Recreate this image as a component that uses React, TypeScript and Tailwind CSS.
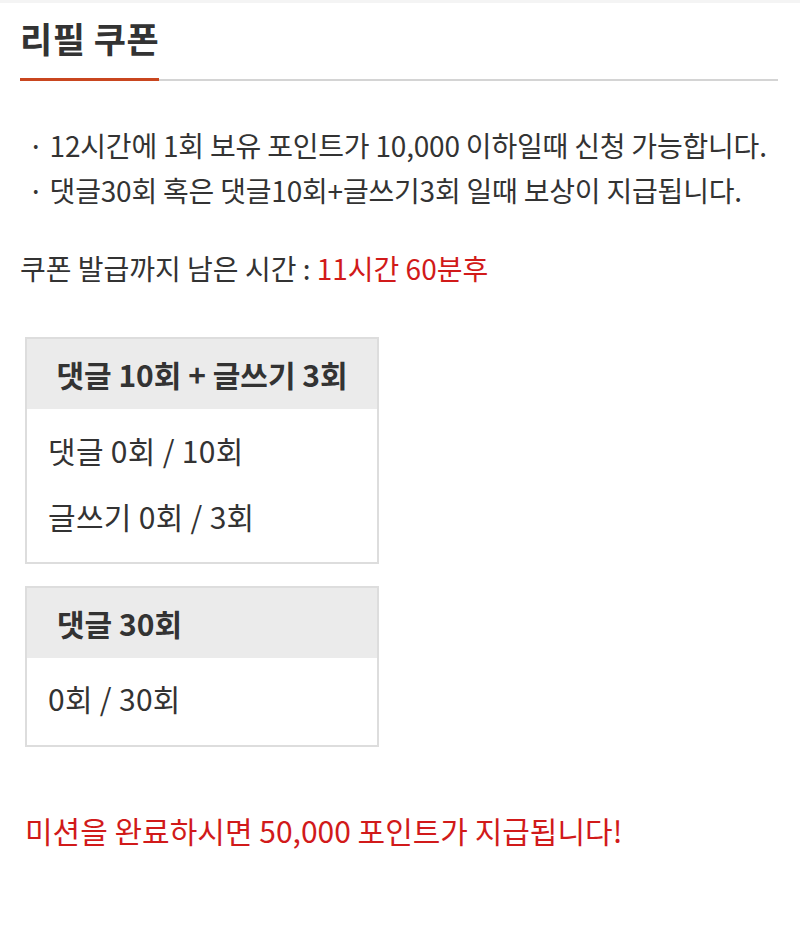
export default function App() {
  return (
    <div className="min-h-[929px] w-[800px] bg-white text-[#333] [font-family:'Noto_Sans_CJK_KR','Noto_Sans',sans-serif]">
      <div className="h-[3px] bg-[#f4f4f4]" />
      <div className="px-5 pt-[13px]">
        <h1 className="text-[35px] font-bold leading-[44px] tracking-[0.5px] text-[#333]">리필 쿠폰</h1>
        <div className="mt-[18px] flex items-end">
          <div className="h-[3px] w-[139px] bg-[#c9461f]" />
          <div className="mr-[2px] h-[2px] flex-1 bg-[#d4d4d4]" />
        </div>

        <div className="mt-[42px] pl-2 text-[28px] leading-[45px] tracking-[-0.2px] text-[#333]">
          <p>· 12시간에 1회 보유 포인트가 10,000 이하일때 신청 가능합니다.</p>
          <p>· 댓글30회 혹은 댓글10회+글쓰기3회 일때 보상이 지급됩니다.</p>
        </div>

        <p className="mt-[35px] text-[28px] leading-[40px] text-[#333]">
          쿠폰 발급까지 남은 시간 : <span className="text-[#d11a1a]">11시간 60분후</span>
        </p>

        <div className="ml-[5px] mt-[49px] flex w-[354px] flex-col gap-[22px]">
          <div className="border-2 border-[#dddddd]">
            <div className="flex h-[70px] items-center justify-center bg-[#ebebeb] text-[30px] font-bold text-[#333]">
              댓글 10회 + 글쓰기 3회
            </div>
            <div className="flex flex-col gap-[26px] px-[21px] pb-[26px] pt-[21px] text-[30px] leading-[40px] tracking-[0.3px]">
              <p>댓글 0회 / 10회</p>
              <p>글쓰기 0회 / 3회</p>
            </div>
          </div>
          <div className="border-2 border-[#dddddd]">
            <div className="flex h-[70px] items-center bg-[#ebebeb] pl-[30px] text-[30px] font-bold text-[#333]">
              댓글 30회
            </div>
            <div className="px-[21px] pb-[27px] pt-[20px] text-[30px] leading-[40px] tracking-[0.3px]">
              <p>0회 / 30회</p>
            </div>
          </div>
        </div>

        <p className="ml-[5px] mt-[63px] text-[30px] leading-[40px] text-[#d11a1a]">
          미션을 완료하시면 50,000 포인트가 지급됩니다!
        </p>
      </div>
    </div>
  );
}
